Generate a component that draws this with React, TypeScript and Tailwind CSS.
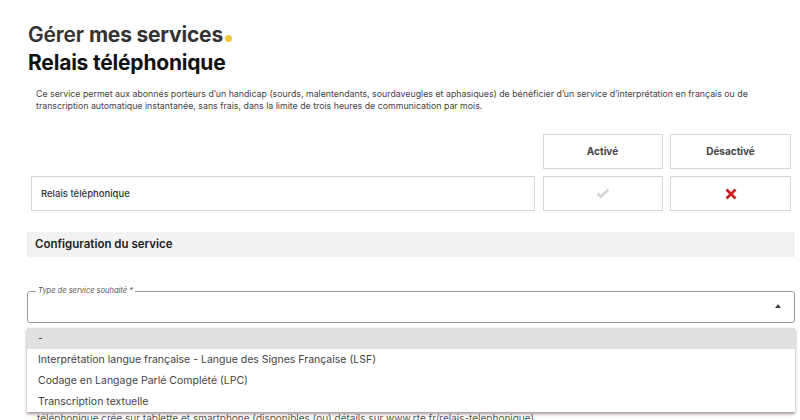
import React from "react";

export default function App() {
  return (
    <div className="relative h-[420px] w-[800px] overflow-hidden bg-white text-[#333] [font-family:Inter,'Noto_Sans',sans-serif]">
      <div className="pl-[28px] pt-[22px]">
        <h1 className="flex items-end text-[21px] leading-[25px] tracking-[-0.2px] text-[#333]">
          <span className="font-semibold">Gérer&nbsp;</span>
          <span className="font-bold">mes services</span>
          <span className="mb-[5px] ml-[2px] h-[7px] w-[7px] rounded-full bg-[#f2c83c]" />
        </h1>
        <h2 className="mt-[3px] text-[21px] font-bold leading-[25px] tracking-[-0.2px] text-[#111]">
          Relais téléphonique
        </h2>
      </div>
      <p className="ml-[36px] mt-[13px] w-[740px] text-[8.8px] leading-[12px] text-[#444]">
        Ce service permet aux abonnés porteurs d’un handicap (sourds, malentendants, sourdaveugles et aphasiques) de bénéficier d’un service d’interprétation en français ou de transcription automatique instantanée, sans frais, dans la limite de trois heures de communication par mois.
      </p>

      <div className="ml-[31px] mt-[22px] grid w-[760px] grid-cols-[504px_120px_121px] gap-x-[7.5px] gap-y-[7px]">
        <div />
        <div className="flex h-[35px] items-center justify-center border border-[#d6d6d6] text-[10px] font-bold text-[#444]">
          Activé
        </div>
        <div className="flex h-[35px] items-center justify-center border border-[#d6d6d6] text-[10px] font-bold text-[#444]">
          Désactivé
        </div>
        <div className="flex h-[35px] items-center border border-[#d6d6d6] pl-[9px] pt-[2px] text-[9.5px] font-medium text-[#333]">
          Relais téléphonique
        </div>
        <div className="flex h-[35px] items-center justify-center border border-[#d6d6d6]">
          <svg width="14" height="11" viewBox="0 0 14 11">
            <path d="M1.5 5.5 L5 8.8 L12.5 1.5" fill="none" stroke="#d4d4d4" strokeWidth="2.6" />
          </svg>
        </div>
        <div className="flex h-[35px] items-center justify-center border border-[#d6d6d6]">
          <svg width="12" height="12" viewBox="0 0 12 12">
            <path d="M1.5 1.5 L10.5 10.5 M10.5 1.5 L1.5 10.5" fill="none" stroke="#c8201c" strokeWidth="2.8" />
          </svg>
        </div>
      </div>

      <div className="ml-[27px] mt-[21px] flex h-[25px] w-[768px] items-center bg-[#f2f2f2] pl-[8px] text-[11.5px] font-semibold text-[#222]">
        Configuration du service
      </div>

      <div className="relative ml-[27px] mt-[30px] w-[768px]">
        <fieldset className="h-[36px] rounded-[3px] border border-[#9a9a9a] px-[8px]">
          <legend className="px-[2px] text-[7.5px] italic leading-[8px] text-[#555]">
            Type de service souhaité *
          </legend>
        </fieldset>
        <svg className="absolute right-[14px] top-[17px]" width="6" height="4" viewBox="0 0 6 4">
          <path d="M0 4 L3 0 L6 4 Z" fill="#444" />
        </svg>
        <p className="mt-[89px] px-[10px] text-[10px] leading-[12px] text-[#555]">
          téléphonique crée sur tablette et smartphone (disponibles (ou) détails sur www.rte.fr/relais-telephonique).
        </p>
        <div className="absolute left-0 right-0 top-[41px] bg-white shadow-[0_2px_3px_rgba(90,60,60,0.55)]">
          <div className="flex h-[21px] items-center bg-[#e0e0e0] pl-[11px] text-[10.5px] text-[#444]">-</div>
          <div className="flex h-[21px] items-center pl-[11px] text-[10.5px] text-[#444]">
            Interprétation langue française - Langue des Signes Française (LSF)
          </div>
          <div className="flex h-[21px] items-center pl-[11px] text-[10.5px] text-[#444]">
            Codage en Langage Parlé Complété (LPC)
          </div>
          <div className="flex h-[21px] items-center pl-[11px] text-[10.5px] text-[#444]">
            Transcription textuelle
          </div>
        </div>
      </div>
    </div>
  );
}
